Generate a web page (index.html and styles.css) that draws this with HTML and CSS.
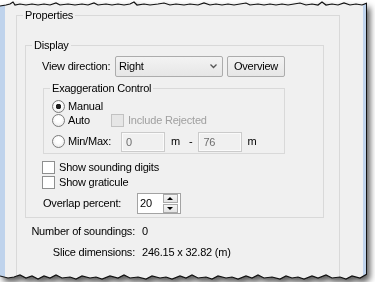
FILE: index.html
```html
<!DOCTYPE html>
<html lang="en">
<head>
    <meta charset="UTF-8">
    <meta name="viewport" content="width=device-width, initial-scale=1.0">
    <title>Properties</title>
    <link rel="stylesheet" href="styles.css">
</head>
<body>
    <div class="shot">
        <div class="window">
            <div class="frame"></div>
            <div class="client">
                <fieldset class="group props">
                    <legend>Properties</legend>
                    <fieldset class="group display">
                        <legend>Display</legend>
                        <div class="display-body">
                            <div class="view-row">
                                <span class="view-label">View direction:</span>
                                <div class="combo">
                                    <span>Right</span>
                                    <svg width="7" height="5" viewBox="0 0 7 5"><path d="M0.5 0.5 L3.5 3.5 L6.5 0.5" fill="none" stroke="#555" stroke-width="1.3"/></svg>
                                </div>
                                <button class="btn">Overview</button>
                            </div>
                            <fieldset class="group exag">
                                <legend>Exaggeration Control</legend>
                                <div class="exag-body">
                                    <div class="opt-row manual-row">
                                        <label class="radio"><span class="dot on"></span>Manual</label>
                                    </div>
                                    <div class="opt-row auto-row">
                                        <label class="radio auto-opt"><span class="dot"></span>Auto</label>
                                        <label class="check disabled"><span class="box"></span>Include Rejected</label>
                                    </div>
                                    <div class="opt-row minmax-row">
                                        <label class="radio minmax-opt"><span class="dot"></span>Min/Max:</label>
                                        <span class="field">0</span>
                                        <span class="unit">m</span>
                                        <span class="dash">-</span>
                                        <span class="field">76</span>
                                        <span class="unit">m</span>
                                    </div>
                                </div>
                            </fieldset>
                            <label class="check sounding"><span class="box"></span>Show sounding digits</label>
                            <label class="check graticule"><span class="box"></span>Show graticule</label>
                            <div class="overlap-row">
                                <span class="overlap-label">Overlap percent:</span>
                                <div class="spin">
                                    <span class="spin-value">20</span>
                                    <div class="spin-btns">
                                        <span class="spin-btn up"></span>
                                        <span class="spin-btn down"></span>
                                    </div>
                                </div>
                            </div>
                        </div>
                    </fieldset>
                    <div class="info">
                        <span class="info-label">Number of soundings:</span><span>0</span>
                        <span class="info-label">Slice dimensions:</span><span>246.15 x 32.82 (m)</span>
                    </div>
                </fieldset>
            </div>
            <div class="frame frame-right"></div>
        </div>
        <!-- рваный край скриншота -->
        <svg class="tear" width="367" height="282" viewBox="0 0 367 282">
            <polyline fill="none" stroke="#111" stroke-width="1.2" points="0,6 6,5 10,4 13,2 15,5 20,4 26,5 32,4 38,5 44,4 50,5 56,3 60,5 68,4 75,5 82,4 88,5 94,3 98,5 106,4 112,5 118,4 124,5 130,4 134,2 137,5 144,4 150,5 158,4 164,3 170,5 176,4 184,5 190,4 198,5 204,3 210,5 216,4 222,5 228,4 234,5 240,4 246,3 250,5 258,4 264,5 270,4 276,5 282,4 288,5 294,4 300,3 306,5 312,4 318,5 322,2 326,5 332,4 338,5 344,3 350,5 356,4 362,5 367,3"/>
            <polyline fill="none" stroke="#111" stroke-width="1.2" points="0,276 8,278 14,277 20,275 26,278 32,276 38,279 44,276 50,278 56,275 62,278 70,277 76,279 82,276 90,278 96,277 102,279 110,276 118,278 124,275 130,278 138,277 146,279 152,276 160,278 166,277 172,279 180,276 186,278 192,275 198,278 206,277 212,279 218,276 226,278 232,277 238,279 246,276 252,278 258,275 264,278 272,277 280,279 286,276 292,278 298,277 304,279 312,276 318,278 326,275 332,278 340,277 346,279 352,276 360,278 367,274"/>
        </svg>
    </div>
</body>
</html>
```

FILE: styles.css
```css
body, html {
    margin: 0;
    padding: 0;
    background-color: #ffffff;
    font-family: "Liberation Sans", Arial, sans-serif;
    font-size: 11px;
    line-height: 13px;
    letter-spacing: -0.2px;
    color: #000000;
}
.shot {
    position: relative;
    width: 367px;
    height: 282px;
    filter: drop-shadow(3px 4px 3px rgba(0, 0, 0, 0.65));
}
.window {
    display: flex;
    width: 367px;
    height: 282px;
    background-color: #f0f0f0;
    clip-path: polygon(0px 6px, 6px 5px, 10px 4px, 13px 2px, 15px 5px, 20px 4px, 26px 5px, 32px 4px, 38px 5px, 44px 4px, 50px 5px, 56px 3px, 60px 5px, 68px 4px, 75px 5px, 82px 4px, 88px 5px, 94px 3px, 98px 5px, 106px 4px, 112px 5px, 118px 4px, 124px 5px, 130px 4px, 134px 2px, 137px 5px, 144px 4px, 150px 5px, 158px 4px, 164px 3px, 170px 5px, 176px 4px, 184px 5px, 190px 4px, 198px 5px, 204px 3px, 210px 5px, 216px 4px, 222px 5px, 228px 4px, 234px 5px, 240px 4px, 246px 3px, 250px 5px, 258px 4px, 264px 5px, 270px 4px, 276px 5px, 282px 4px, 288px 5px, 294px 4px, 300px 3px, 306px 5px, 312px 4px, 318px 5px, 322px 2px, 326px 5px, 332px 4px, 338px 5px, 344px 3px, 350px 5px, 356px 4px, 362px 5px, 367px 3px,
        367px 274px, 360px 278px, 352px 276px, 346px 279px, 340px 277px, 332px 278px, 326px 275px, 318px 278px, 312px 276px, 304px 279px, 298px 277px, 292px 278px, 286px 276px, 280px 279px, 272px 277px, 264px 278px, 258px 275px, 252px 278px, 246px 276px, 238px 279px, 232px 277px, 226px 278px, 218px 276px, 212px 279px, 206px 277px, 198px 278px, 192px 275px, 186px 278px, 180px 276px, 172px 279px, 166px 277px, 160px 278px, 152px 276px, 146px 279px, 138px 277px, 130px 278px, 124px 275px, 118px 278px, 110px 276px, 102px 279px, 96px 277px, 90px 278px, 82px 276px, 76px 279px, 70px 277px, 62px 278px, 56px 275px, 50px 278px, 44px 276px, 38px 279px, 32px 276px, 26px 278px, 20px 275px, 14px 277px, 8px 278px, 0px 276px);
}
.frame {
    flex: none;
    width: 5px;
    background-color: #bfd3ec;
}
.frame-right {
    width: 3px;
    border-right: 1px solid #111111;
}
.client {
    flex: 1;
    overflow: hidden;
    padding-top: 9px;
}
.tear {
    position: absolute;
    left: 0;
    top: 0;
    pointer-events: none;
}

/* group boxes */
.group {
    margin: 0;
    padding: 0;
    min-width: 0;
    box-sizing: border-box;
    border: 1px solid #d9d9d9;
}
.group legend {
    margin-left: 6px;
    padding: 0 2px;
    line-height: 13px;
}
.props {
    width: 324px;
    height: 300px;
    margin-left: 11px;
}
.display {
    width: 299px;
    margin: 17px 0 0 8px;
}
.display-body {
    padding: 4px 0 3px 16px;
}
.view-row {
    display: flex;
    align-items: center;
    height: 21px;
}
.view-label {
    width: 73px;
}
.combo {
    box-sizing: border-box;
    width: 108px;
    height: 21px;
    display: flex;
    align-items: center;
    justify-content: space-between;
    padding: 0 5px 0 3px;
    border: 1px solid #acacac;
    border-radius: 2px;
    background: linear-gradient(#f3f3f3, #e6e6e6);
}
.btn {
    box-sizing: border-box;
    width: 58px;
    height: 21px;
    margin-left: 4px;
    padding: 0;
    font: inherit;
    letter-spacing: inherit;
    color: #000000;
    border: 1px solid #acacac;
    border-radius: 2px;
    background: linear-gradient(#f3f3f3, #e6e6e6);
}
.exag {
    width: 242px;
    margin: 5px 0 0 1px;
}
.exag-body {
    padding: 5px 0 1px 8px;
}
.opt-row {
    display: flex;
    align-items: center;
}
.manual-row {
    height: 13px;
}
.auto-row {
    height: 15px;
}
.minmax-row {
    height: 21px;
    margin-top: 3px;
}
.radio, .check {
    display: flex;
    align-items: center;
    gap: 3px;
}
.auto-opt {
    width: 59px;
}
.minmax-opt {
    width: 69px;
}
.dot {
    width: 13px;
    height: 13px;
    box-sizing: border-box;
    border-radius: 50%;
    border: 1px solid #7b7b7b;
    background: radial-gradient(circle at 50% 40%, #ffffff 30%, #e4e4e4 100%);
}
.dot.on {
    background: radial-gradient(circle, #1e1e1e 0 2.5px, transparent 3px), radial-gradient(circle at 50% 40%, #ffffff 30%, #e4e4e4 100%);
}
.box {
    width: 13px;
    height: 13px;
    box-sizing: border-box;
    border: 1px solid #8e8f8f;
    background-color: #ffffff;
    margin-right: 1px;
}
.check.disabled {
    color: #a0a0a0;
}
.check.disabled .box {
    border-color: #c2c2c2;
    background-color: #e6e6e6;
}
.field {
    box-sizing: border-box;
    width: 44px;
    height: 20px;
    padding: 3px 0 0 4px;
    color: #6d6d6d;
    border: 1px solid #cbcbcb;
    box-shadow: inset 0 0 0 1px #fafafa;
}
.unit {
    margin-left: 6px;
}
.dash {
    margin: 0 6px 0 9px;
}
.field + .unit + .dash + .field + .unit {
    margin-left: 5px;
}
.sounding {
    height: 13px;
    margin-top: 7px;
}
.graticule {
    height: 13px;
    margin-top: 2px;
}
.overlap-row {
    display: flex;
    align-items: center;
    height: 21px;
    margin-top: 4px;
    padding-left: 1px;
}
.overlap-label {
    width: 94px;
}
.spin {
    box-sizing: border-box;
    width: 44px;
    height: 21px;
    display: flex;
    border: 1px solid #a3a3a3;
    background-color: #ffffff;
}
.spin-value {
    flex: 1;
    padding: 3px 0 0 2px;
}
.spin-btns {
    width: 15px;
    margin-right: 2px;
    display: flex;
    flex-direction: column;
    gap: 1px;
}
.spin-btn {
    position: relative;
    flex: 1;
    box-sizing: border-box;
    border: 1px solid #a9a9a9;
    background: linear-gradient(#f4f4f4, #e3e3e3);
}
.spin-btn::after {
    content: "";
    position: absolute;
    left: 3px;
    top: 2px;
    border-left: 3px solid transparent;
    border-right: 3px solid transparent;
}
.spin-btn.up::after {
    border-bottom: 3px solid #000000;
}
.spin-btn.down::after {
    border-top: 3px solid #000000;
}
.info {
    display: grid;
    grid-template-columns: 118px auto;
    column-gap: 7px;
    row-gap: 8px;
    margin-top: 7px;
}
.info-label {
    text-align: right;
}
```
